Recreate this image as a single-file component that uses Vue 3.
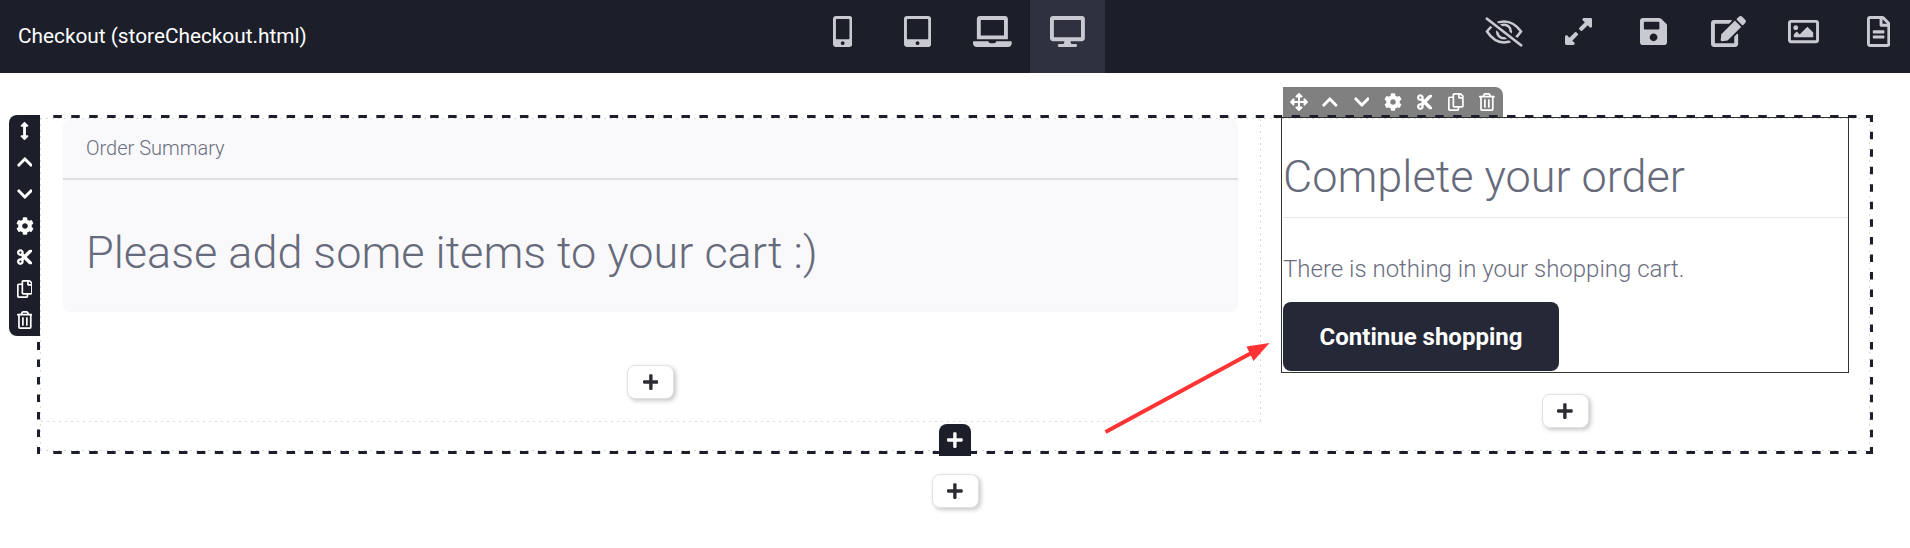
<script setup>
const P = {
  phone: [320, 'M272 0H48C21.5 0 0 21.5 0 48v416c0 26.5 21.5 48 48 48h224c26.5 0 48-21.5 48-48V48c0-26.5-21.5-48-48-48zM160 480c-17.7 0-32-14.3-32-32s14.3-32 32-32 32 14.3 32 32-14.3 32-32 32zm112-108c0 6.6-5.4 12-12 12H60c-6.6 0-12-5.4-12-12V60c0-6.6 5.4-12 12-12h200c6.6 0 12 5.4 12 12v312z'],
  tablet: [448, 'M400 0H48C21.5 0 0 21.5 0 48v416c0 26.5 21.5 48 48 48h352c26.5 0 48-21.5 48-48V48c0-26.5-21.5-48-48-48zM224 480c-17.7 0-32-14.3-32-32s14.3-32 32-32 32 14.3 32 32-14.3 32-32 32zm176-108c0 6.6-5.4 12-12 12H60c-6.6 0-12-5.4-12-12V60c0-6.6 5.4-12 12-12h328c6.6 0 12 5.4 12 12v312z'],
  laptop: [640, 'M624 416H381.54c-.74 19.81-14.71 32-32.74 32H288c-18.69 0-33.02-17.47-32.77-32H16c-8.8 0-16 7.2-16 16v16c0 35.2 28.8 64 64 64h512c35.2 0 64-28.8 64-64v-16c0-8.8-7.2-16-16-16zM576 48c0-26.4-21.6-48-48-48H112C85.6 0 64 21.6 64 48v336h512V48zm-64 272H128V64h384v256z'],
  desktop: [576, 'M528 0H48C21.5 0 0 21.5 0 48v320c0 26.5 21.5 48 48 48h192l-16 48h-72c-13.3 0-24 10.7-24 24s10.7 24 24 24h272c13.3 0 24-10.7 24-24s-10.7-24-24-24h-72l-16-48h192c26.5 0 48-21.5 48-48V48c0-26.5-21.5-48-48-48zm-16 352H64V64h448v288z'],
  expand: [448, 'M212.686 315.314L120 408l32.922 31.029c15.12 15.12 4.412 40.971-16.97 40.971h-112C10.697 480 0 469.255 0 456V344c0-21.382 25.803-32.09 40.922-16.971L72 360l92.686-92.686c6.248-6.248 16.379-6.248 22.627 0l25.373 25.373c6.249 6.248 6.249 16.378 0 22.627zm22.628-118.628L328 104l-32.922-31.029C279.958 57.851 290.666 32 312.048 32h112C437.303 32 448 42.745 448 56v112c0 21.382-25.803 32.09-40.922 16.971L376 152l-92.686 92.686c-6.248 6.248-16.379 6.248-22.627 0l-25.373-25.373c-6.249-6.248-6.249-16.378 0-22.627z'],
  save: [448, 'M433.941 129.941l-83.882-83.882A48 48 0 0 0 316.118 32H48C21.49 32 0 53.49 0 80v352c0 26.51 21.49 48 48 48h352c26.51 0 48-21.49 48-48V163.882a48 48 0 0 0-14.059-33.941zM224 416c-35.346 0-64-28.654-64-64 0-35.346 28.654-64 64-64s64 28.654 64 64c0 35.346-28.654 64-64 64zm96-304.52V212c0 6.627-5.373 12-12 12H76c-6.627 0-12-5.373-12-12V108c0-6.627 5.373-12 12-12h228.52c3.183 0 6.235 1.264 8.485 3.515l3.48 3.48A11.996 11.996 0 0 1 320 111.48z'],
  edit: [576, 'M402.6 83.2l90.2 90.2c3.8 3.8 3.8 10 0 13.8L274.4 405.6l-92.8 10.3c-12.4 1.4-22.9-9.1-21.5-21.5l10.3-92.8L388.8 83.2c3.8-3.8 10-3.8 13.8 0zm162-22.9l-48.8-48.8c-15.2-15.2-39.9-15.2-55.2 0l-35.4 35.4c-3.8 3.8-3.8 10 0 13.8l90.2 90.2c3.8 3.8 10 3.8 13.8 0l35.4-35.4c15.2-15.3 15.2-40 0-55.2zM384 346.2V448H64V128h229.8c3.2 0 6.2-1.3 8.5-3.5l40-40c7.6-7.6 2.2-20.5-8.5-20.5H48C21.5 64 0 85.5 0 112v352c0 26.5 21.5 48 48 48h352c26.5 0 48-21.5 48-48V306.2c0-10.7-12.9-16-20.5-8.5l-40 40c-2.2 2.3-3.5 5.3-3.5 8.5z'],
  image: [512, 'M464 64H48C21.49 64 0 85.49 0 112v288c0 26.51 21.49 48 48 48h416c26.51 0 48-21.49 48-48V112c0-26.51-21.49-48-48-48zm-6 336H54a6 6 0 0 1-6-6V118a6 6 0 0 1 6-6h404a6 6 0 0 1 6 6v276a6 6 0 0 1-6 6zM128 152c-22.091 0-40 17.909-40 40s17.909 40 40 40 40-17.909 40-40-17.909-40-40-40zM96 352h320v-80l-87.515-87.515c-4.686-4.686-12.284-4.686-16.971 0L192 304l-39.515-39.515c-4.686-4.686-12.284-4.686-16.971 0L96 304v48z'],
  file: [384, 'M288 248v28c0 6.6-5.4 12-12 12H108c-6.6 0-12-5.4-12-12v-28c0-6.6 5.4-12 12-12h168c6.6 0 12 5.4 12 12zm-12 72H108c-6.6 0-12 5.4-12 12v28c0 6.6 5.4 12 12 12h168c6.6 0 12-5.4 12-12v-28c0-6.6-5.4-12-12-12zm108-188.1V464c0 26.5-21.5 48-48 48H48c-26.5 0-48-21.5-48-48V48C0 21.5 21.5 0 48 0h204.1C264.8 0 277 5.1 286 14.1L369.9 98c9 8.9 14.1 21.2 14.1 33.9zm-128-80V128h76.1L256 51.9zM336 464V176H232c-13.3 0-24-10.7-24-24V48H48v416h288z'],
  move: [512, 'M352.201 425.775l-79.196 79.196c-9.373 9.373-24.568 9.373-33.941 0l-79.196-79.196c-15.119-15.119-4.411-40.971 16.971-40.97h51.162L228 284H127.196v51.162c0 21.382-25.851 32.09-40.971 16.971L7.029 272.937c-9.373-9.373-9.373-24.569 0-33.941L86.225 159.8c15.119-15.119 40.971-4.411 40.971 16.971V228H228V127.196h-51.23c-21.382 0-32.09-25.851-16.971-40.971l79.196-79.196c9.373-9.373 24.568-9.373 33.941 0l79.196 79.196c15.119 15.119 4.411 40.971-16.971 40.971h-51.162V228h100.804v-51.162c0-21.382 25.851-32.09 40.97-16.971l79.196 79.196c9.373 9.373 9.373 24.569 0 33.941L425.773 352.2c-15.119 15.119-40.971 4.411-40.97-16.971V284H284v100.804h51.23c21.382 0 32.09 25.851 16.971 40.971z'],
  vert: [256, 'M214.059 377.941H168V134.059h46.059c21.382 0 32.09-25.851 16.971-40.971L144.971 7.029c-9.373-9.373-24.569-9.373-33.941 0L24.971 93.088c-15.119 15.119-4.411 40.971 16.971 40.971H88v243.882H41.941c-21.382 0-32.09 25.851-16.971 40.971l86.059 86.059c9.373 9.373 24.569 9.373 33.941 0l86.059-86.059c15.12-15.119 4.412-40.971-16.97-40.971z'],
  up: [448, 'M240.971 130.524l194.343 194.343c9.373 9.373 9.373 24.569 0 33.941l-22.667 22.667c-9.357 9.357-24.522 9.375-33.901.04L224 227.495 69.255 381.516c-9.379 9.335-24.544 9.317-33.901-.04l-22.667-22.667c-9.373-9.373-9.373-24.569 0-33.941L207.03 130.525c9.372-9.373 24.568-9.373 33.941-.001z'],
  down: [448, 'M207.029 381.476L12.686 187.132c-9.373-9.373-9.373-24.569 0-33.941l22.667-22.667c9.357-9.357 24.522-9.375 33.901-.04L224 284.505l154.745-154.021c9.379-9.335 24.544-9.317 33.901.04l22.667 22.667c9.373 9.373 9.373 24.569 0 33.941L240.971 381.476c-9.373 9.372-24.569 9.372-33.942 0z'],
  cog: [512, 'M487.4 315.7l-42.6-24.6c4.3-23.2 4.3-47 0-70.2l42.6-24.6c4.9-2.8 7.1-8.6 5.5-14-11.1-35.6-30-67.8-54.7-94.6-3.8-4.1-10-5.1-14.8-2.3L380.8 110c-17.9-15.4-38.5-27.3-60.8-35.1V25.8c0-5.6-3.9-10.5-9.4-11.7-36.7-8.2-74.3-7.8-109.2 0-5.5 1.2-9.4 6.1-9.4 11.7V75c-22.2 7.9-42.8 19.8-60.8 35.1L88.7 85.5c-4.9-2.8-11-1.9-14.8 2.3-24.7 26.7-43.6 58.9-54.7 94.6-1.7 5.4.6 11.2 5.5 14L67.3 221c-4.3 23.2-4.3 47 0 70.2l-42.6 24.6c-4.9 2.8-7.1 8.6-5.5 14 11.1 35.6 30 67.8 54.7 94.6 3.8 4.1 10 5.1 14.8 2.3l42.6-24.6c17.9 15.4 38.5 27.3 60.8 35.1v49.2c0 5.6 3.9 10.5 9.4 11.7 36.7 8.2 74.3 7.8 109.2 0 5.5-1.2 9.4-6.1 9.4-11.7v-49.2c22.2-7.9 42.8-19.8 60.8-35.1l42.6 24.6c4.9 2.8 11 1.9 14.8-2.3 24.7-26.7 43.6-58.9 54.7-94.6 1.5-5.5-.7-11.3-5.6-14.1zM256 336c-44.1 0-80-35.9-80-80s35.9-80 80-80 80 35.9 80 80-35.9 80-80 80z'],
  cut: [448, 'M278.06 256L444.48 89.57c4.69-4.69 4.69-12.29 0-16.97-32.8-32.8-85.99-32.8-118.79 0L210.18 188.12l-24.86-24.86c4.31-10.92 6.68-22.81 6.68-35.26 0-53.02-42.98-96-96-96S0 74.98 0 128s42.98 96 96 96c4.54 0 8.99-.32 13.36-.93L142.29 256l-32.93 32.93c-4.37-.61-8.83-.93-13.36-.93-53.02 0-96 42.98-96 96s42.98 96 96 96 96-42.98 96-96c0-12.45-2.37-24.34-6.68-35.26l24.86-24.86L325.69 439.4c32.8 32.8 85.99 32.8 118.79 0 4.69-4.68 4.69-12.28 0-16.97L278.06 256zM96 160c-17.64 0-32-14.36-32-32s14.36-32 32-32 32 14.36 32 32-14.36 32-32 32zm0 256c-17.64 0-32-14.36-32-32s14.36-32 32-32 32 14.36 32 32-14.36 32-32 32z'],
  copy: [448, 'M433.941 65.941l-51.882-51.882A48 48 0 0 0 348.118 0H176c-26.51 0-48 21.49-48 48v48H48c-26.51 0-48 21.49-48 48v320c0 26.51 21.49 48 48 48h224c26.51 0 48-21.49 48-48v-48h80c26.51 0 48-21.49 48-48V99.882a48 48 0 0 0-14.059-33.941zM266 464H54a6 6 0 0 1-6-6V150a6 6 0 0 1 6-6h74v224c0 26.51 21.49 48 48 48h96v42a6 6 0 0 1-6 6zm128-96H182a6 6 0 0 1-6-6V54a6 6 0 0 1 6-6h106v88c0 13.255 10.745 24 24 24h88v202a6 6 0 0 1-6 6zm6-256h-64V48h9.632c1.591 0 3.117.632 4.243 1.757l48.368 48.368a6 6 0 0 1 1.757 4.243V112z'],
  trash: [448, 'M268 416h24a12 12 0 0 0 12-12V188a12 12 0 0 0-12-12h-24a12 12 0 0 0-12 12v216a12 12 0 0 0 12 12zM432 80h-82.41l-34-56.7A48 48 0 0 0 274.41 0H173.59a48 48 0 0 0-41.16 23.3L98.41 80H16A16 16 0 0 0 0 96v16a16 16 0 0 0 16 16h16v336a48 48 0 0 0 48 48h288a48 48 0 0 0 48-48V128h16a16 16 0 0 0 16-16V96a16 16 0 0 0-16-16zM171.84 50.91A6 6 0 0 1 177 48h94a6 6 0 0 1 5.15 2.91L293.61 80H154.39zM368 464H80V128h288zm-212-48h24a12 12 0 0 0 12-12V188a12 12 0 0 0-12-12h-24a12 12 0 0 0-12 12v216a12 12 0 0 0 12 12z'],
  plus: [448, 'M416 208H272V64c0-17.67-14.33-32-32-32h-32c-17.67 0-32 14.33-32 32v144H32c-17.67 0-32 14.33-32 32v32c0 17.67 14.33 32 32 32h144v144c0 17.67 14.33 32 32 32h32c17.67 0 32-14.33 32-32V304h144c17.67 0 32-14.33 32-32v-32c0-17.67-14.33-32-32-32z']
}
const box = (n) => `0 0 ${P[n][0]} 512`
const w = (n, s) => ({ width: (P[n][0] / 512) * s + 'px', height: s + 'px' })
const devices = [
  { n: 'phone' }, { n: 'tablet' }, { n: 'laptop' }, { n: 'desktop', active: true }
]
const actions = ['expand', 'save', 'edit', 'image', 'file']
const rowTools = ['vert', 'up', 'down', 'cog', 'cut', 'copy', 'trash']
const colTools = ['move', 'up', 'down', 'cog', 'cut', 'copy', 'trash']
</script>

<template>
  <div class="page">
    <header class="bar">
      <div class="title">Checkout (storeCheckout.html)</div>
      <nav class="devices">
        <button v-for="d in devices" :key="d.n" class="tab" :class="{ active: d.active }">
          <svg :viewBox="box(d.n)" :style="w(d.n, 31)"><path :d="P[d.n][1]" /></svg>
        </button>
      </nav>
      <div class="actions">
        <button class="tab">
          <svg class="eye" viewBox="0 0 40 32" width="40" height="32">
            <path d="M3 15.500C8 8.500 14 5.500 20 5.500S32 8.500 37 15.500C32 23 26 26.500 20 26.500S8 23 3 15.500z" />
            <circle cx="20" cy="15.500" r="6.800" />
            <path class="gap" d="M2 2l36 28" />
            <path d="M2 2l36 28" />
          </svg>
        </button>
        <button v-for="a in actions" :key="a" class="tab">
          <svg :viewBox="box(a)" :style="w(a, 31)"><path :d="P[a][1]" /></svg>
        </button>
      </div>
    </header>

    <main class="stage">
      <section class="row">
        <div class="rail">
          <span v-for="t in rowTools" :key="t" class="tool">
            <svg :viewBox="box(t)" :style="w(t, 18)"><path :d="P[t][1]" /></svg>
          </span>
        </div>

        <div class="col-left">
          <article class="card">
            <div class="card-head">Order Summary</div>
            <div class="card-body">Please add some items to your cart :)</div>
          </article>
          <div class="add-wrap left-add">
            <button class="add"><svg :viewBox="box('plus')" :style="w('plus', 18)"><path :d="P.plus[1]" /></svg></button>
          </div>
        </div>

        <div class="col-right">
          <div class="box">
            <div class="strip">
              <span v-for="t in colTools" :key="t" class="tool">
                <svg :viewBox="box(t)" :style="w(t, 18)"><path :d="P[t][1]" /></svg>
              </span>
            </div>
            <h1 class="heading">Complete your order</h1>
            <hr class="rule" />
            <p class="note">There is nothing in your shopping cart.</p>
            <a class="cta">Continue shopping</a>
          </div>
          <div class="add-wrap right-add">
            <button class="add"><svg :viewBox="box('plus')" :style="w('plus', 18)"><path :d="P.plus[1]" /></svg></button>
          </div>
        </div>

        <button class="add-dark"><svg :viewBox="box('plus')" :style="w('plus', 18)"><path :d="P.plus[1]" /></svg></button>
      </section>

      <div class="add-wrap page-add">
        <button class="add"><svg :viewBox="box('plus')" :style="w('plus', 18)"><path :d="P.plus[1]" /></svg></button>
      </div>
    </main>

    <svg class="overlay" viewBox="0 0 1910 548" width="1910" height="548">
      <g class="dash">
        <line x1="53.300" y1="116.500" x2="1873" y2="116.500" stroke-dasharray="8.500 9.447" />
        <line x1="53.300" y1="452.500" x2="1873" y2="452.500" stroke-dasharray="8.500 9.447" />
        <line x1="1871.500" y1="115" x2="1871.500" y2="122" />
        <line x1="1871.500" y1="131.700" x2="1871.500" y2="440" stroke-dasharray="7.500 10.030" />
        <line x1="1871.500" y1="447" x2="1871.500" y2="454" />
        <line x1="38.500" y1="342" x2="38.500" y2="350" />
        <line x1="38.500" y1="359.500" x2="38.500" y2="440" stroke-dasharray="7.500 10.030" />
        <line x1="38.500" y1="447" x2="38.500" y2="454" />
      </g>
      <line x1="1105.500" y1="432" x2="1255" y2="351" class="shaft" />
      <path d="M1269.500 343 1246.500 346.500 1253.500 361z" class="head" />
    </svg>
  </div>
</template>

<style scoped>
.page {
  position: relative;
  width: 1910px;
  height: 548px;
  overflow: hidden;
  background: #fff;
  font-family: Roboto, "Liberation Sans", sans-serif;
  color: #666a7a;
}
.bar {
  height: 73px;
  background: #1c1f2a;
  display: grid;
  grid-template-columns: 805px 300px 1fr;
}
.title {
  padding-left: 18px;
  line-height: 73px;
  font-size: 20.8px;
  color: #fff;
}
.devices,
.actions {
  display: flex;
}
.actions {
  justify-content: flex-end;
  margin-right: -6px;
}
.tab {
  width: 75px;
  height: 73px;
  flex: none;
  padding: 0 0 10px;
  border: 0;
  background: none;
  display: flex;
  align-items: center;
  justify-content: center;
}
.tab.active {
  background: #2f3140;
}
.tab svg {
  fill: #c9cad1;
}
.tab svg.eye {
  fill: none;
  stroke: #c9cad1;
  stroke-width: 2.6;
}
.tab svg.eye .gap {
  stroke: #1c1f2a;
  stroke-width: 7;
}
.stage {
  display: flow-root;
}
.row {
  --dot: #dadada;
  position: relative;
  box-sizing: border-box;
  width: 1830px;
  height: 333px;
  margin: 45px 0 0 40px;
  padding: 1px;
  background:
    repeating-linear-gradient(90deg, var(--dot) 0 2px, transparent 2px 6px) left top / 100% 1px no-repeat,
    repeating-linear-gradient(90deg, var(--dot) 0 2px, transparent 2px 6px) left bottom / 100% 1px no-repeat,
    repeating-linear-gradient(180deg, var(--dot) 0 2px, transparent 2px 6px) left top / 1px 100% no-repeat,
    repeating-linear-gradient(180deg, var(--dot) 0 2px, transparent 2px 6px) right top / 1px 100% no-repeat;
  display: grid;
  grid-template-columns: 1220px 1fr;
  align-items: start;
}
.rail {
  position: absolute;
  left: -31px;
  top: -3px;
  width: 31px;
  height: 221px;
  background: #1c1f2a;
  border-radius: 8px 0 0 8px;
  display: flex;
  flex-direction: column;
}
.tool {
  flex: 1;
  display: flex;
  align-items: center;
  justify-content: center;
}
.tool svg {
  fill: #fff;
}
.col-left {
  --dot: #dadada;
  box-sizing: border-box;
  height: 303px;
  padding: 0 23px 0 22px;
  background:
    repeating-linear-gradient(180deg, var(--dot) 0 2px, transparent 2px 6px) right top / 1px 100% no-repeat,
    repeating-linear-gradient(90deg, var(--dot) 0 2px, transparent 2px 6px) left bottom / 100% 1px no-repeat;
}
.card {
  height: 192px;
  background: #f9f9fb;
  border-radius: 8px;
  box-shadow: 0 1px 2px rgba(0, 0, 0, 0.04);
}
.card-head {
  box-sizing: border-box;
  height: 61px;
  padding: 0 23px;
  line-height: 59px;
  font-size: 20px;
  font-weight: 300;
  border-bottom: 2px solid #dfdfe3;
  color: #6a6e80;
}
.card-body {
  padding: 46px 23px 0;
  font-size: 45px;
  line-height: 54px;
  font-weight: 300;
  color: #666a7a;
}
.add-wrap {
  display: flex;
  justify-content: center;
}
.left-add {
  margin-top: 54px;
}
.right-add {
  margin-top: 21px;
}
.page-add {
  margin-top: 23px;
}
.add {
  box-sizing: border-box;
  width: 47px;
  height: 34px;
  padding: 0;
  background: #fff;
  border: 1px solid #e2e2e2;
  border-radius: 8px;
  box-shadow: 2px 2px 4px rgba(0, 0, 0, 0.22);
  display: flex;
  align-items: center;
  justify-content: center;
}
.add svg {
  fill: #2c2c34;
}
.add-dark {
  position: absolute;
  left: 50%;
  bottom: -5px;
  transform: translateX(-50%);
  width: 32px;
  height: 32px;
  padding: 0;
  background: #1c1f2a;
  border: 0;
  border-radius: 8px 8px 0 0;
  display: flex;
  align-items: center;
  justify-content: center;
}
.add-dark svg {
  fill: #fff;
}
.col-right {
  padding: 0 20px;
}
.box {
  position: relative;
  box-sizing: border-box;
  height: 256px;
  margin-top: -2px;
  padding-left: 1px;
  border: 1px solid #333;
}
.strip {
  position: absolute;
  left: 1px;
  top: -31px;
  width: 220px;
  height: 30px;
  background: #808080;
  border-radius: 0 8px 0 0;
  display: flex;
}
.heading {
  margin: 32px 0 13px;
  font-size: 45px;
  line-height: 54px;
  font-weight: 300;
  color: #666a7a;
}
.rule {
  margin: 0;
  border: 0;
  border-top: 1px solid #e8e8e8;
}
.note {
  margin: 36px 0 0;
  font-size: 24px;
  line-height: 30px;
  font-weight: 300;
  color: #6a6e80;
}
.cta {
  box-sizing: border-box;
  display: flex;
  align-items: center;
  justify-content: center;
  width: 276px;
  height: 69px;
  margin-top: 18px;
  background: #252837;
  border-radius: 8px;
  color: #fff;
  font-size: 24px;
  font-weight: 700;
}
.overlay {
  position: absolute;
  left: 0;
  top: 0;
  pointer-events: none;
}
.dash line {
  stroke: #1c1f2a;
  stroke-width: 3;
}
.shaft {
  stroke: #ff3333;
  stroke-width: 4;
}
.head {
  fill: #ff3333;
}
</style>
